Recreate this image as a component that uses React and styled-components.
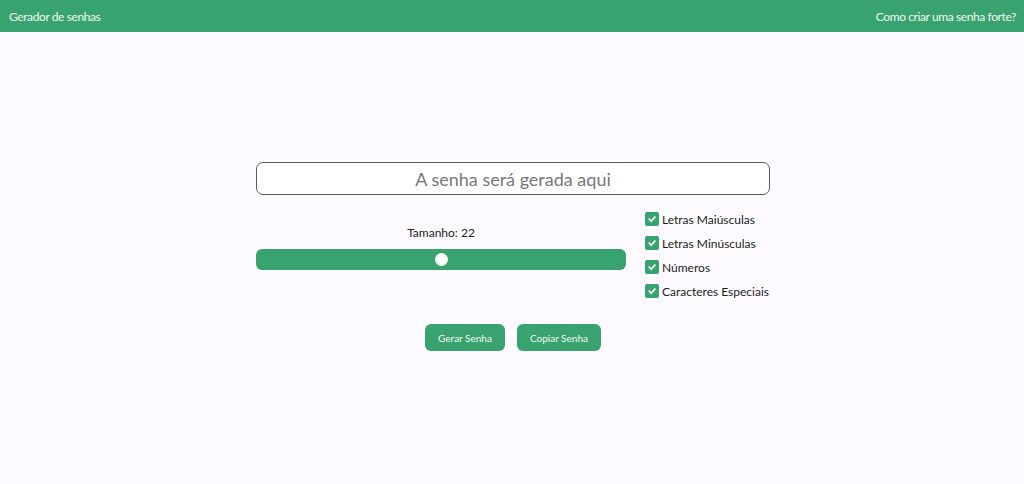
import React, { useState } from "react";
import styled, { createGlobalStyle } from "styled-components";

const GREEN = "#38a36f";

const Global = createGlobalStyle`
  html, body { margin: 0; padding: 0; height: 100%; }
  body {
    background: #fdfbff;
    font-family: Lato, "Noto Sans", sans-serif;
    color: #1f1f1f;
  }
  #root { min-height: 100vh; display: flex; flex-direction: column; }
`;

const Header = styled.header`
  height: 32px;
  background: ${GREEN};
  display: flex;
  align-items: center;
  justify-content: space-between;
  padding: 0 8px 0 9px;
  color: #f2f7f3;
  font-size: 12px;
  letter-spacing: -0.4px;
  flex-shrink: 0;
`;

const HeaderLink = styled.a`
  color: inherit;
  text-decoration: none;
`;

const Main = styled.main`
  flex: 1;
  display: flex;
  align-items: center;
  justify-content: center;
  padding-left: 2px;
  padding-bottom: 3px;
`;

const Card = styled.div`
  width: 514px;
  display: flex;
  flex-direction: column;
  align-items: center;
`;

const Output = styled.input`
  box-sizing: border-box;
  width: 514px;
  height: 33px;
  border: 1.5px solid #5a5a5a;
  border-radius: 7px;
  background: #fff;
  text-align: center;
  font-family: inherit;
  font-size: 18px;
  color: #333;
  outline: none;
  &::placeholder { color: #777; }
`;

const Options = styled.div`
  width: 100%;
  display: flex;
  gap: 19px;
  margin-top: 13px;
`;

const SliderCol = styled.div`
  width: 370px;
  flex-shrink: 0;
  display: flex;
  flex-direction: column;
  align-items: center;
  padding-top: 16px;
`;

const SizeLabel = styled.div`
  font-size: 12px;
  color: #222;
  height: 18px;
  line-height: 18px;
`;

const Range = styled.input`
  -webkit-appearance: none;
  appearance: none;
  width: 370px;
  height: 21px;
  margin: 7px 0 0;
  border-radius: 6px;
  background: ${GREEN};
  outline: none;
  &::-webkit-slider-thumb {
    -webkit-appearance: none;
    width: 13px;
    height: 13px;
    border-radius: 50%;
    background: #fff;
    border: none;
    cursor: pointer;
  }
`;

const CheckList = styled.div`
  display: flex;
  flex-direction: column;
  gap: 8px;
  padding-top: 3px;
`;

const CheckRow = styled.label`
  display: flex;
  align-items: center;
  gap: 3px;
  font-size: 12px;
  color: #1c1c1c;
  height: 16px;
  white-space: nowrap;
  cursor: pointer;
`;

const Box = styled.span`
  width: 14px;
  height: 14px;
  border-radius: 2px;
  background: ${(p) => (p.$checked ? GREEN : "#fff")};
  border: ${(p) => (p.$checked ? "none" : "1px solid #777")};
  display: inline-flex;
  align-items: center;
  justify-content: center;
  box-sizing: border-box;
`;

const Buttons = styled.div`
  display: flex;
  gap: 12px;
  margin-top: 25px;
`;

const Button = styled.button`
  height: 27px;
  padding: 0 13px;
  border: none;
  border-radius: 6px;
  background: ${GREEN};
  color: #f4f9f5;
  font-family: inherit;
  font-size: 10px;
  cursor: pointer;
`;

const Check = ({ label, checked, onToggle }) => (
  <CheckRow onClick={onToggle}>
    <Box $checked={checked}>
      {checked && (
        <svg width="10" height="10" viewBox="0 0 10 10">
          <path d="M2.2 5.2 L4.2 7.1 L7.9 3.2" fill="none" stroke="#fff" strokeWidth="1.7" strokeLinecap="round" strokeLinejoin="round" />
        </svg>
      )}
    </Box>
    {label}
  </CheckRow>
);

export default function App() {
  const [size, setSize] = useState(22);
  const [opts, setOpts] = useState([true, true, true, true]);
  const labels = ["Letras Maiúsculas", "Letras Minúsculas", "Números", "Caracteres Especiais"];
  return (
    <>
      <Global />
      <Header>
        <HeaderLink href="#">Gerador de senhas</HeaderLink>
        <HeaderLink href="#">Como criar uma senha forte?</HeaderLink>
      </Header>
      <Main>
        <Card>
          <Output readOnly placeholder="A senha será gerada aqui" />
          <Options>
            <SliderCol>
              <SizeLabel>Tamanho: {size}</SizeLabel>
              <Range type="range" min="4" max="40" value={size} onChange={(e) => setSize(+e.target.value)} />
            </SliderCol>
            <CheckList>
              {labels.map((l, i) => (
                <Check key={l} label={l} checked={opts[i]} onToggle={() => setOpts(opts.map((o, j) => (j === i ? !o : o)))} />
              ))}
            </CheckList>
          </Options>
          <Buttons>
            <Button>Gerar Senha</Button>
            <Button>Copiar Senha</Button>
          </Buttons>
        </Card>
      </Main>
    </>
  );
}
